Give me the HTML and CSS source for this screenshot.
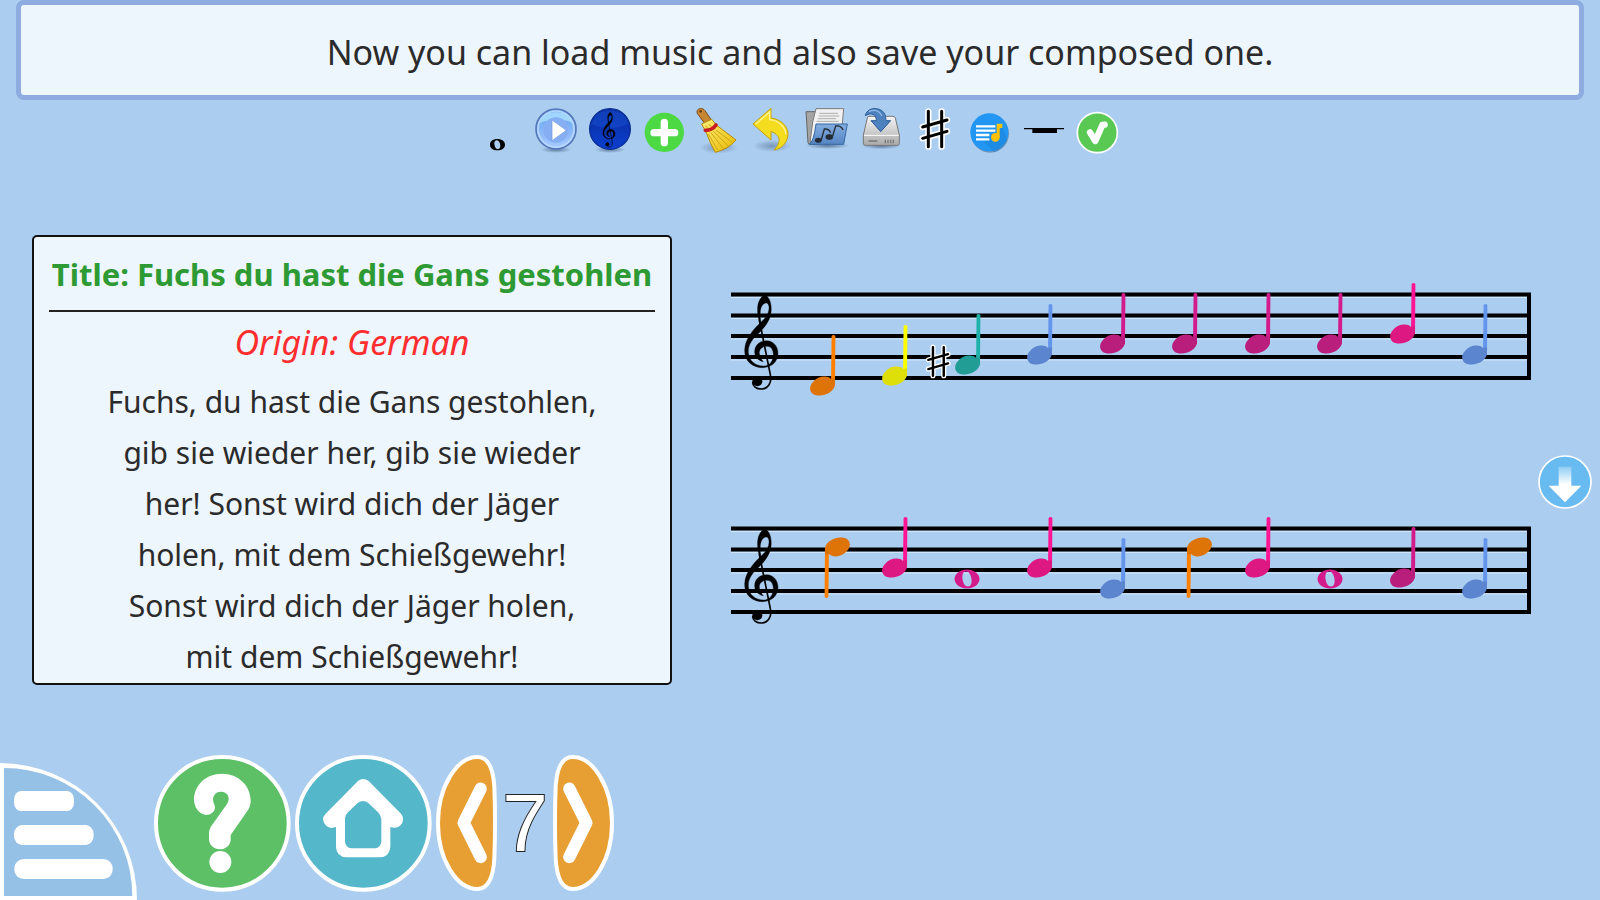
FILE: index.html
```html
<!DOCTYPE html>
<html lang="en">
<head>
    <meta charset="UTF-8">
    <meta name="viewport" content="width=device-width, initial-scale=1.0">
    <title>Piano composition</title>
    <link rel="stylesheet" href="styles.css">
</head>
<body>
    <!-- shared shapes -->
    <svg class="defs" width="0" height="0" aria-hidden="true">
        <defs>
            <linearGradient id="playFill" x1="0" y1="0" x2="0" y2="1">
                <stop offset="0" stop-color="#5f9ff0"/><stop offset="1" stop-color="#a9cbff"/>
            </linearGradient>
            <linearGradient id="navyFill" x1="0" y1="0" x2="0" y2="1">
                <stop offset="0" stop-color="#0a2c9c"/><stop offset="1" stop-color="#0b3fd0"/>
            </linearGradient>
            <linearGradient id="gold" x1="0" y1="0" x2="1" y2="1">
                <stop offset="0" stop-color="#fff07a"/><stop offset="1" stop-color="#e8b800"/>
            </linearGradient>
            <linearGradient id="metal" x1="0" y1="0" x2="0" y2="1">
                <stop offset="0" stop-color="#f6f6f6"/><stop offset="1" stop-color="#a9a9a9"/>
            </linearGradient>
            <linearGradient id="folder" x1="0" y1="0" x2="0" y2="1">
                <stop offset="0" stop-color="#84aee0"/><stop offset="1" stop-color="#5585c4"/>
            </linearGradient>
            <linearGradient id="arrowFade" x1="0" y1="0" x2="0" y2="1">
                <stop offset="0" stop-color="#8fcdf5"/><stop offset="0.5" stop-color="#ffffff"/>
            </linearGradient>
            <radialGradient id="shade">
                <stop offset="0" stop-color="#2c4468" stop-opacity="0.6"/><stop offset="1" stop-color="#2c4468" stop-opacity="0"/>
            </radialGradient>
            <radialGradient id="softShade">
                <stop offset="0" stop-color="#2c4468" stop-opacity="0.4"/><stop offset="1" stop-color="#2c4468" stop-opacity="0"/>
            </radialGradient>
            <g id="clef">
                <path d="M119 160C107 118 112 86 134 75C150 80 156 105 153 128C150 152 134 172 116 190C96 208 84 225 85 247C87 273 106 288 130 288C148 288 159 276 160 254C160 239 153 229 141 229C126 229 117 238 118 250C119 261 124 268 130 275C112 271 104 260 104 245C104 225 120 212 140 212C160 213 174 228 174 250C174 276 154 293 128 293C96 293 73 272 74 240C75 210 93 188 109 170C127 152 145 140 147 116C148 104 143 98 137 99C122 104 117 122 123 158Z" stroke="#000" stroke-width="1"/>
                <path d="M118 150L151 314C157 340 142 357 125 357C108 357 98 348 98 336" fill="none" stroke="#000" stroke-width="5"/>
                <circle cx="112" cy="334" r="15"/>
            </g>
            <g id="staff">
                <path class="line-glow" d="M0 27.5H796M0 48.5H796M0 69H796M0 90H796"/>
                <path class="line" d="M0 24.5H800M0 45.5H800M0 66H800M0 87H800M0 108H800M798 23V110"/>
                <use href="#clef" transform="translate(-11 0) scale(0.3333)"/>
            </g>
            <g id="up">
                <path d="M9.600 -50Q11.500 -52 13.400 -50L13 0L9 0Z" fill="currentColor"/>
                <path d="M9 -7C5 -11 -4 -10 -9 -4C-14 1 -12.500 9 -4 9.500C5 10 13 4 13 -2L13 -8Z" class="head"/>
                <path d="M9 -7C5 -11 -4 -10 -9 -4C-14 1 -12.500 9 -4 9.500C5 10 13 4 13 -2L13 -8Z" class="head-shade"/>
            </g>
            <g id="down"><use href="#up" transform="rotate(180)"/></g>
            <g id="whole">
                <path d="M0 -9.500C7 -9.500 12.500 -5 12.500 0S7 9.500 0 9.500S-12.500 5 -12.500 0S-7 -9.500 0 -9.500ZM-1 -7.500C-4 -7.500 -5 -4 -4.500 0C-4 4 -2 7.500 1 7.500C4 7.500 5 4 4.500 0C4 -4 2 -7.500 -1 -7.500Z" fill="currentColor"/>
            </g>
            <g id="sharp">
                <path d="M385 34V140M425 34V140M368 81L441 60M368 115L441 94"/>
            </g>
        </defs>
    </svg>

    <header class="message">
        <p>Now you can load music and also save your composed one.</p>
    </header>

    <nav class="toolbar">
        <button type="button" aria-label="Whole note">
            <svg viewBox="-12 0 162 180"><path fill-rule="evenodd" d="M52 117C66 117 75 124 75 134S66 151 52 151S30 144 30 134S38 117 52 117ZM49 121C43 122 42 130 44 137C46 144 50 148 55 147C61 146 62 138 60 131C58 124 54 120 49 121Z"/></svg>
        </button>
        <button type="button" aria-label="Play">
            <svg viewBox="150 0 162 180">
                <ellipse cx="228" cy="149" rx="46" ry="10" fill="url(#shade)"/>
                <circle cx="228" cy="87" r="60" fill="url(#playFill)" stroke="#5578b8" stroke-width="5"/>
                <circle cx="228" cy="87" r="54" fill="none" stroke="#b8d8ff" stroke-width="5"/>
                <path d="M180 72C186 44 206 36 228 36S271 44 277 72C262 54 244 64 228 66S194 54 180 72Z" fill="#aee2ff" opacity="0.8"/>
                <circle cx="228" cy="90" r="38" fill="#86aff3"/>
                <path d="M216 60L255 88Q258 91 255 94L216 122Z" fill="#fff" stroke="#7298dc" stroke-width="2"/>
            </svg>
        </button>
        <button type="button" aria-label="Change clef">
            <svg viewBox="312 0 162 180">
                <ellipse cx="390" cy="149" rx="46" ry="10" fill="url(#shade)"/>
                <circle cx="390" cy="87" r="61" fill="url(#navyFill)" stroke="#092d92" stroke-width="4"/>
                <path d="M335 72Q390 96 445 72C438 46 418 31 390 31S342 46 335 72Z" fill="#1a55d8" opacity="0.45"/>
                <use href="#clef" transform="translate(341 9) scale(0.37)"/>
            </svg>
        </button>
        <button type="button" aria-label="Add note">
            <svg viewBox="474 0 162 180">
                <circle cx="553" cy="97" r="59" fill="#4cd944"/>
                <path d="M553 67V128M522 98H584" stroke="#fff" stroke-width="22" stroke-linecap="round"/>
            </svg>
        </button>
        <button type="button" aria-label="Erase">
            <svg viewBox="636 0 162 180">
                <ellipse cx="716" cy="143" rx="58" ry="18" fill="url(#softShade)"/>
                <path d="M651 34C653 24 668 22 675 32L696 63L677 74L656 46Q650 40 651 34Z" fill="#c78632" stroke="#7b4c12" stroke-width="3"/>
                <circle cx="662" cy="34" r="4" fill="#6b3d0c"/>
                <path d="M665 72L695 58L710 76L768 120Q745 147 706 157Q692 134 679 98Z" fill="url(#gold)" stroke="#b48b08" stroke-width="3" stroke-linejoin="round"/>
                <path d="M685 102L713 150M692 97L730 146M700 94L744 137M707 90L756 126M676 77L690 91M686 72L698 84" stroke="#cda61a" stroke-width="3" fill="none"/>
                <path d="M676 91Q697 91 708 75" stroke="#c81c24" stroke-width="11" fill="none" stroke-linecap="round"/>
            </svg>
        </button>
        <button type="button" aria-label="Undo">
            <svg viewBox="798 0 162 180">
                <ellipse cx="876" cy="138" rx="58" ry="18" fill="url(#softShade)"/>
                <path d="M819 72L873 25V54C907 59 925 82 924 104C922 130 903 147 882 150C899 133 909 109 873 94V120Z" fill="#f4dc1e" stroke="#c6a20a" stroke-width="3" stroke-linejoin="round"/>
                <path d="M827 72L869 36V59C897 62 917 82 917 103" fill="none" stroke="#fff29a" stroke-width="4"/>
            </svg>
        </button>
        <button type="button" aria-label="Open melody">
            <svg viewBox="0 0 162 180">
                <ellipse cx="82" cy="137" rx="66" ry="10" fill="url(#shade)"/>
                <path d="M18 35H48L50 133H30Q25 133 24 128Z" fill="#a4a4a4" stroke="#666" stroke-width="3"/>
                <path d="M48 26H131L126 82L30 128L38 66Z" fill="#f1f1f1" stroke="#7a7a7a" stroke-width="3"/>
                <path d="M58 40H114M56 48H118M53 56H108M50 64H116" stroke="#aaa" stroke-width="3"/>
                <path d="M48 72H142L131 133H28Q41 125 48 72Z" fill="url(#folder)" stroke="#3467a5" stroke-width="3"/>
                <g fill="#252b34" stroke="#252b34">
                    <ellipse cx="55" cy="121" rx="10" ry="7"/><ellipse cx="88" cy="111" rx="11" ry="8"/>
                    <path d="M64 119L73 87Q87 86 92 98" fill="none" stroke-width="4"/>
                    <path d="M98 108L107 78Q124 76 129 90" fill="none" stroke-width="4"/>
                </g>
            </svg>
        </button>
        <button type="button" aria-label="Save melody">
            <svg viewBox="162 0 162 180">
                <ellipse cx="244" cy="138" rx="60" ry="10" fill="url(#shade)"/>
                <path d="M207 49H279Q284 49 286 54L298 105V130Q298 136 292 136H196Q190 136 190 130V105L202 54Q203 49 207 49Z" fill="url(#metal)" stroke="#777" stroke-width="3"/>
                <path d="M192 106H296" stroke="#fff" stroke-width="3"/>
                <path d="M205 123H232M256 119V130M264 119V130M272 119V130M280 119V130" stroke="#777" stroke-width="4"/>
                <path d="M196 47C199 31 214 24 229 26C251 29 258 44 258 62H272L242 95L213 62H229C229 45 216 35 196 47Z" fill="#4e82bf" stroke="#2d5d9c" stroke-width="3" stroke-linejoin="round"/>
                <path d="M206 35Q232 23 246 48" fill="none" stroke="#91b9e6" stroke-width="4"/>
            </svg>
        </button>
        <button type="button" aria-label="Accidental">
            <svg viewBox="324 0 162 180">
                <use href="#sharp" class="sharp-halo"/>
                <use href="#sharp" class="sharp"/>
            </svg>
        </button>
        <button type="button" aria-label="Lyrics">
            <svg viewBox="486 0 162 180">
                <circle cx="570" cy="101" r="57" fill="#4d6e94" opacity="0.6"/>
                <circle cx="568" cy="97" r="57" fill="#2196f3"/>
                <path d="M550 124L583 157Q610 148 622 119L607 80Z" fill="#1a7bcb" opacity="0.35"/>
                <path d="M528 79H586M528 92H586M528 105H568M528 118H568" stroke="#fff" stroke-width="7"/>
                <circle cx="586" cy="112" r="13" fill="#ffc107"/>
                <path d="M590 71H607V84H599V112H590Z" fill="#ffc107"/>
            </svg>
        </button>
        <button type="button" aria-label="Rest">
            <svg viewBox="648 0 162 180">
                <path d="M672 86H792" stroke="#000" stroke-width="4"/>
                <path d="M697 86H771V99H697Z"/>
            </svg>
        </button>
        <button type="button" aria-label="OK">
            <svg viewBox="810 0 162 180">
                <circle cx="892" cy="98" r="60" fill="#59c954" stroke="#fff" stroke-width="5"/>
                <path d="M870 97L886 123L907 75L914 74" fill="none" stroke="#fff" stroke-width="19" stroke-linecap="round" stroke-linejoin="round"/>
            </svg>
        </button>
    </nav>

    <main class="workspace">
        <section class="lyrics">
            <h1>Title: Fuchs du hast die Gans gestohlen</h1>
            <p class="origin">Origin: German</p>
            <p class="verse" lang="de">Fuchs, du hast die Gans gestohlen,<br>
                gib sie wieder her, gib sie wieder<br>
                her! Sonst wird dich der Jäger<br>
                holen, mit dem Schießgewehr!<br>
                Sonst wird dich der Jäger holen,<br>
                mit dem Schießgewehr!</p>
        </section>

        <section class="score" aria-label="Score">
            <svg viewBox="0 0 800 130">
                <use href="#staff"/>
                <use href="#up" class="c" x="91" y="116"/>
                <use href="#up" class="d" x="163" y="106"/>
                <g transform="translate(98 68) scale(0.27)">
                    <use href="#sharp" class="sharp-halo"/>
                    <use href="#sharp" class="sharp"/>
                </g>
                <use href="#up" class="e" x="236" y="95"/>
                <use href="#up" class="f" x="308" y="85"/>
                <use href="#up" class="g" x="381" y="74"/>
                <use href="#up" class="g" x="453" y="74"/>
                <use href="#up" class="g" x="526" y="74"/>
                <use href="#up" class="g" x="598" y="74"/>
                <use href="#up" class="a" x="671" y="64"/>
                <use href="#up" class="f" x="743" y="85"/>
            </svg>
            <svg viewBox="0 0 800 130">
                <use href="#staff"/>
                <use href="#down" class="c" x="107" y="43"/>
                <use href="#up" class="a" x="163" y="64"/>
                <use href="#whole" class="g" x="236" y="75"/>
                <use href="#up" class="a" x="308" y="64"/>
                <use href="#up" class="f" x="381" y="85"/>
                <use href="#down" class="c" x="469" y="43"/>
                <use href="#up" class="a" x="526" y="64"/>
                <use href="#whole" class="g" x="599" y="75"/>
                <use href="#up" class="g" x="671" y="74"/>
                <use href="#up" class="f" x="743" y="85"/>
            </svg>
        </section>

        <button type="button" class="scroll" aria-label="Scroll down">
            <svg viewBox="1254 556 162 162">
                <circle cx="1335" cy="637" r="78" fill="#68bbf1" stroke="#fff" stroke-width="5"/>
                <path d="M1316 591H1354V648H1384L1335 698L1286 648H1316Z" fill="url(#arrowFade)"/>
            </svg>
        </button>
    </main>

    <footer class="bar">
        <button type="button" class="menu" aria-label="Menu">
            <svg viewBox="0 69 411 411">
                <path d="M0 69A411 411 0 0 1 411 480H0Z" fill="#fff"/>
                <path d="M12 84A385 384 0 0 1 397 468H12Z" fill="#95c1e6"/>
                <rect x="42" y="153" width="180" height="60" rx="20" ry="26" fill="#fff"/>
                <rect x="42" y="255" width="239" height="60" rx="24" ry="28" fill="#fff"/>
                <rect x="43" y="357" width="295" height="60" rx="28" fill="#fff"/>
            </svg>
        </button>
        <button type="button" class="round" aria-label="Help">
            <svg viewBox="462 45 411 411">
                <circle cx="667" cy="250" r="199" fill="#5dc067" stroke="#fff" stroke-width="12"/>
                <path d="M582 180C582 135 618 101 666 101C715 101 752 137 752 182C752 195 748 205 742 213L692 285V300C691 317 676 328 660 328C641 328 627 314 627 297V280Q627 270 632 261L681 192C692 176 685 155 663 155C645 155 636 170 640 185C641 192 645 195 645 202C645 216 632 225 618 225C596 222 583 202 582 180Z" fill="#fff"/>
                <circle cx="661" cy="366" r="33" fill="#fff"/>
            </svg>
        </button>
        <button type="button" class="round" aria-label="Home">
            <svg viewBox="15 45 411 411">
                <circle cx="220" cy="250" r="199" fill="#54b8ca" stroke="#fff" stroke-width="12"/>
                <path d="M204 123Q219 111 236 123L333 221Q343 234 337 248Q329 263 313 263Q306 263 301 261V320Q299 351 268 352H170Q139 350 138 320V261Q132 263 125 264Q105 262 99 240Q99 228 107 221Z" fill="#fff"/>
                <path d="M165 305V235Q166 225 174 217L203 189Q219 177 235 189L264 217Q273 226 274 237V305Q272 323 255 325H184Q167 323 165 305Z" fill="#54b8ca"/>
            </svg>
        </button>
        <div class="level">
            <button type="button" aria-label="Previous level">
                <svg viewBox="437 45 183 408">
                    <path d="M561 51C597 51 609 88 612 140Q614 190 614 249Q614 306 612 356C609 408 597 447 561 447C500 447 443 360 443 249C443 140 500 51 561 51Z" fill="#e79f33" stroke="#fff" stroke-width="12"/>
                    <path d="M571 146L520 248L571 351" class="chevron"/>
                </svg>
            </button>
            <span>7</span>
            <button type="button" aria-label="Next level">
                <svg viewBox="789 45 183 408">
                    <path d="M848 51C812 51 800 88 797 140Q795 190 795 249Q795 306 797 356C800 408 812 447 848 447C909 447 966 360 966 249C966 140 909 51 848 51Z" fill="#e79f33" stroke="#fff" stroke-width="12"/>
                    <path d="M838 146L889 248L838 351" class="chevron"/>
                </svg>
            </button>
        </div>
    </footer>
</body>
</html>
```
FILE: styles.css
```css
* {
    box-sizing: border-box;
}
body {
    margin: 0;
    min-height: 100vh;
    display: flex;
    flex-direction: column;
    background: #abcdef;
    color: #2b2b2b;
    font-family: "Noto Sans", sans-serif;
}
.defs {
    position: absolute;
}
button {
    padding: 0;
    border: none;
    background: none;
    cursor: pointer;
}
svg {
    display: block;
    width: 100%;
}
h1, p {
    margin: 0;
}

/* message on top */
.message {
    margin: 0 16px;
    padding: 22px 20px 18px;
    border: 5px solid #8eace0;
    border-radius: 8px;
    background: #edf5fd;
    text-align: center;
    font-size: 34px;
    line-height: 50px;
}

.toolbar {
    display: flex;
    justify-content: center;
}
.toolbar button {
    width: 54px;
}
.sharp, .sharp-halo {
    fill: none;
    stroke: #000;
    stroke-width: 9;
    stroke-linecap: round;
}
.sharp-halo {
    stroke: #fff;
    stroke-width: 19;
}

/* lyrics + score */
.workspace {
    display: flex;
    align-items: flex-start;
    padding: 75px 8px 0 32px;
}
.lyrics {
    flex: 0 1 640px;
    min-height: 450px;
    padding: 0 15px;
    border: 2px solid #111;
    border-radius: 5px;
    background: #edf5fd;
    text-align: center;
}
.lyrics h1 {
    padding: 12px 0 11px;
    border-bottom: 2px solid #222;
    color: #2e9a33;
    font-size: 31px;
    line-height: 50px;
    white-space: nowrap;
}
.origin {
    padding-top: 5px;
    color: #ff2d2d;
    font-size: 34px;
    font-style: italic;
    line-height: 50px;
}
.verse {
    padding-top: 9px;
    font-size: 30px;
    line-height: 51px;
}
.score {
    flex: 1;
    display: flex;
    flex-direction: column;
    gap: 104px;
    padding: 35px 0 0 59px;
}
.score svg {
    overflow: visible;
}
.line {
    stroke: #000;
    stroke-width: 4;
}
.line-glow {
    stroke: #cfe6fb;
    stroke-width: 1;
}
.head {
    fill: currentColor;
}
.head-shade {
    fill: #333;
    opacity: 0.16;
}
.c { color: #ff8000; }
.d { color: #ffff00; }
.e { color: #20b2aa; }
.f { color: #6495ed; }
.g { color: #d31b8c; }
.a { color: #ff1493; }
.scroll {
    align-self: center;
    width: 54px;
    margin: 44px 0 0 7px;
}

/* bottom bar */
.bar {
    display: flex;
    align-items: flex-end;
    margin-top: auto;
}
.menu {
    width: 137px;
    margin-right: 17px;
}
.round {
    width: 137px;
    margin: 0 4px 8px 0;
}
.level {
    display: flex;
    align-items: center;
    margin-bottom: 9px;
}
.level button {
    width: 61px;
}
.level span {
    width: 56px;
    color: #fff;
    font-family: "Liberation Sans", Arial, sans-serif;
    font-size: 82px;
    line-height: 136px;
    text-align: center;
    -webkit-text-stroke: 2px #222;
    paint-order: stroke fill;
}
.chevron {
    fill: none;
    stroke: #fff;
    stroke-width: 37;
    stroke-linecap: round;
    stroke-linejoin: round;
}
```
